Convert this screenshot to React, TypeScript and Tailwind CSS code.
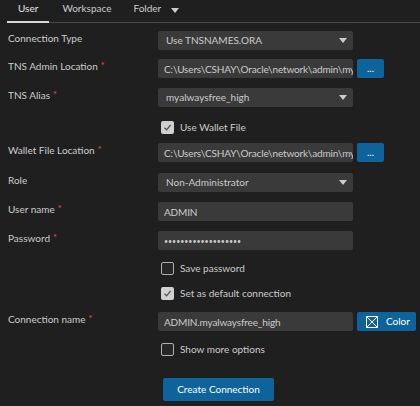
import { ReactNode } from 'react';

function Req() {
  return <span className="ml-[3px] text-[#f14c4c] text-[9px] relative -top-[1px]">*</span>;
}

function Label({ text, required }: { text: string; required?: boolean }) {
  return (
    <div className="w-[150px] shrink-0 pb-[4px] text-[#cccccc]">
      {text}
      {required && <Req />}
    </div>
  );
}

function Caret() {
  return (
    <svg width="8" height="5" viewBox="0 0 8 5" className="shrink-0">
      <path d="M0 0 L8 0 L4 5 Z" fill="#cccccc" />
    </svg>
  );
}

function Select({ value }: { value: string }) {
  return (
    <div className="w-[195px] h-[19px] bg-[#3a3a3a] rounded-[2px] flex items-center justify-between pl-[8px] pr-[6px] text-[#cccccc]">
      <span>{value}</span>
      <Caret />
    </div>
  );
}

function TextBox({ value, password, children }: { value: string; password?: boolean; children?: ReactNode }) {
  return (
    <div className="flex items-center gap-[4px]">
      <input
        readOnly
        type={password ? 'password' : 'text'}
        value={value}
        className={
          password
            ? 'w-[195px] h-[19px] bg-[#3a3a3a] rounded-[2px] pl-[6px] pr-0 text-[#cccccc] text-[7px] tracking-[0px] outline-none'
            : 'w-[195px] h-[19px] bg-[#3a3a3a] rounded-[2px] pl-[6px] pr-0 text-[#cccccc] text-[10px] tracking-[-0.15px] outline-none'
        }
        style={{ fontFamily: 'Lato, "Noto Sans", sans-serif' }}
      />
      {children}
    </div>
  );
}

function Browse() {
  return (
    <button className="w-[27px] h-[19px] bg-[#0e639c] rounded-[2px] text-white text-[10px] leading-none flex items-center justify-center pb-[2px]">
      ...
    </button>
  );
}

function Check({ label, checked }: { label: string; checked?: boolean }) {
  return (
    <div className="flex items-center text-[#cccccc]">
      {checked ? (
        <div className="w-[13px] h-[13px] rounded-[2px] bg-[#d0d0d0] flex items-center justify-center">
          <svg width="9" height="9" viewBox="0 0 9 9">
            <path d="M1.5 4.8 L3.6 6.8 L7.6 2" stroke="#555555" strokeWidth="1.3" fill="none" />
          </svg>
        </div>
      ) : (
        <div className="w-[13px] h-[13px] rounded-[2px] border border-[#b0b0b0] bg-[#262626]" />
      )}
      <span className="ml-[6px]">{label}</span>
    </div>
  );
}

export default function App() {
  return (
    <div className="w-[420px] h-[406px] bg-[#1f1f1f] text-[10px] overflow-hidden" style={{ fontFamily: 'Lato, "Noto Sans", sans-serif' }}>
      <div className="flex items-end h-[23px] ml-[7px] border-b border-[#4a4a4a] text-[#cccccc] text-[10px]">
        <div className="px-[11px] pb-[5px] border-b-2 border-[#d8d8d8] -mb-px text-[#e6e6e6]">User</div>
        <div className="ml-[13px] pb-[6px]">Workspace</div>
        <div className="ml-[22px] pb-[6px]">Folder</div>
        <div className="ml-[10px] pb-[9px]">
          <Caret />
        </div>
      </div>

      <div className="pl-[8px] flex flex-col">
        <div className="mt-[8px] flex items-center">
          <Label text="Connection Type" />
          <Select value="Use TNSNAMES.ORA" />
        </div>
        <div className="mt-[9px] flex items-center">
          <Label text="TNS Admin Location" required />
          <TextBox value="C:\Users\CSHAY\Oracle\network\admin\myalwaysfree">
            <Browse />
          </TextBox>
        </div>
        <div className="mt-[10px] flex items-center">
          <Label text="TNS Alias" required />
          <Select value="myalwaysfree_high" />
        </div>
        <div className="mt-[14px] h-[13px] flex items-center pl-[153px]">
          <Check label="Use Wallet File" checked />
        </div>
        <div className="mt-[9px] flex items-center">
          <Label text="Wallet File Location" required />
          <TextBox value="C:\Users\CSHAY\Oracle\network\admin\myalwaysfree">
            <Browse />
          </TextBox>
        </div>
        <div className="mt-[11px] flex items-center">
          <Label text="Role" />
          <Select value="Non-Administrator" />
        </div>
        <div className="mt-[10px] flex items-center">
          <Label text="User name" required />
          <TextBox value="ADMIN" />
        </div>
        <div className="mt-[10px] flex items-center">
          <Label text="Password" required />
          <TextBox value="secretpassword12345" password />
        </div>
        <div className="mt-[12px] h-[13px] flex items-center pl-[153px]">
          <Check label="Save password" />
        </div>
        <div className="mt-[12px] h-[13px] flex items-center pl-[153px]">
          <Check label="Set as default connection" checked />
        </div>
        <div className="mt-[12px] flex items-center">
          <Label text="Connection name" required />
          <TextBox value="ADMIN.myalwaysfree_high">
            <button className="w-[59px] h-[19px] bg-[#0e639c] rounded-[2px] text-white flex items-center pl-[9px] gap-[8px]">
              <svg width="12" height="12" viewBox="0 0 12 12">
                <rect x="0.5" y="0.5" width="11" height="11" stroke="#ffffff" fill="none" />
                <path d="M1 1 L11 11 M11 1 L1 11" stroke="#ffffff" strokeWidth="1" />
              </svg>
              <span>Color</span>
            </button>
          </TextBox>
        </div>
        <div className="mt-[12px] h-[13px] flex items-center pl-[153px]">
          <Check label="Show more options" />
        </div>
        <div className="mt-[22px] pl-[155px]">
          <button className="w-[111px] h-[23px] bg-[#0e639c] rounded-[2px] text-white">Create Connection</button>
        </div>
      </div>
    </div>
  );
}
